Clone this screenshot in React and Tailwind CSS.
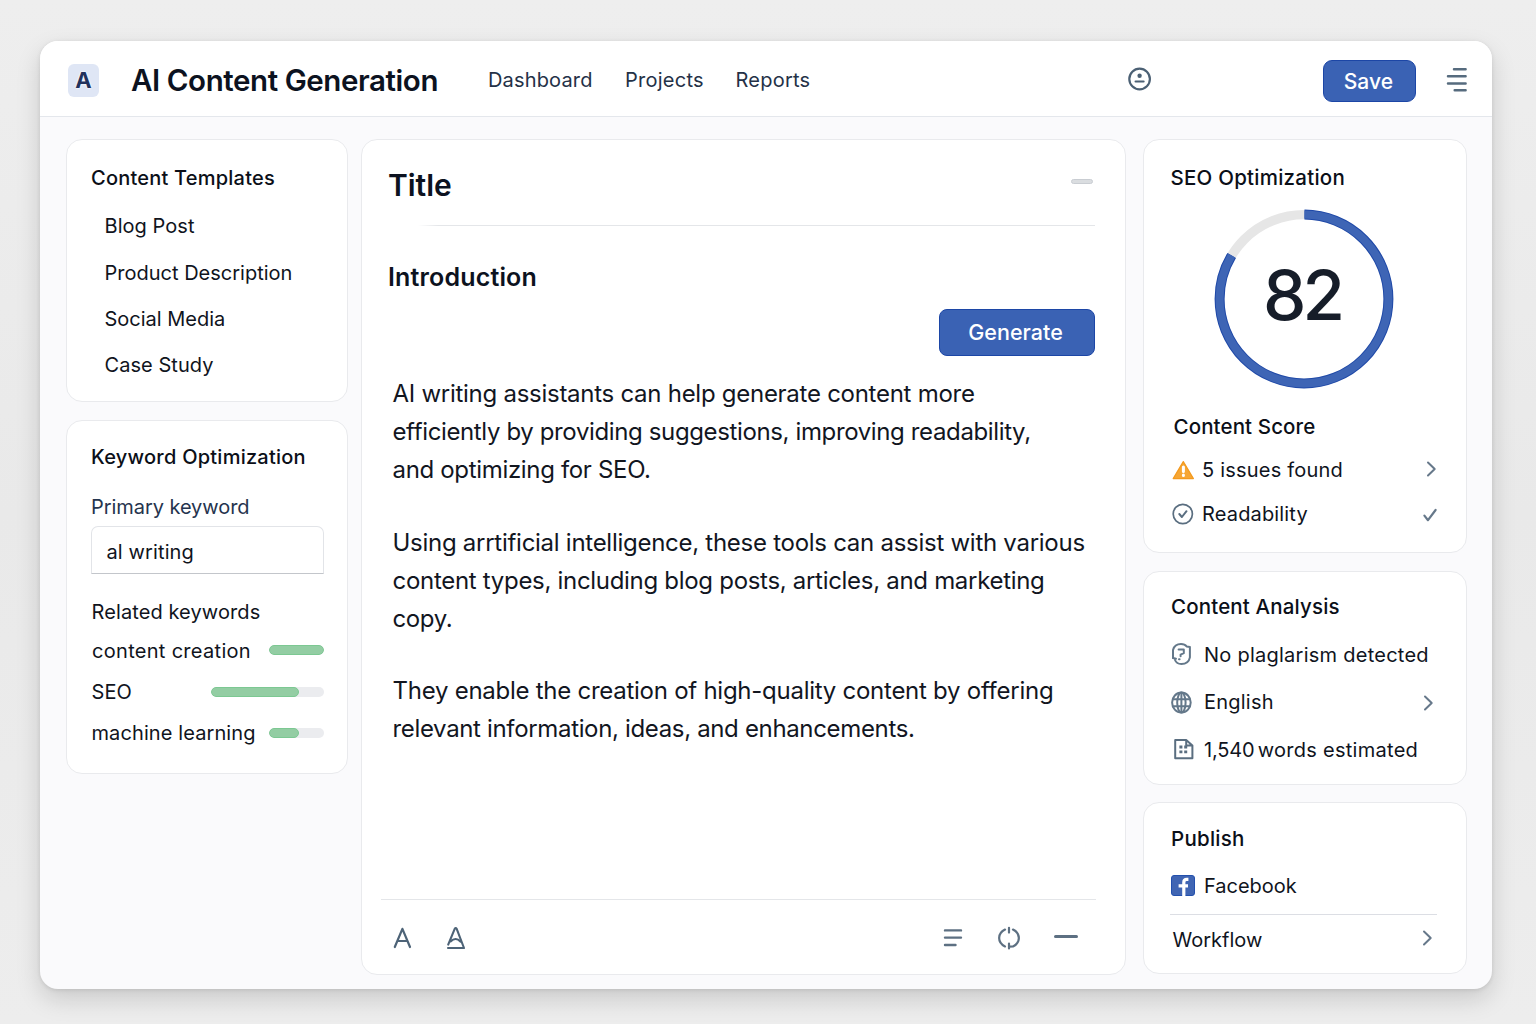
import React from "react";

const cardBase = "box-border flex flex-col rounded-[16px] border border-[#e9eaed] bg-white";
const heading = "h-6 whitespace-nowrap text-[20px] leading-6 font-medium text-[#0b0f18]";
const row = "h-6 whitespace-nowrap text-[20px] leading-6 font-normal text-[#10141d]";

function Chevron({ className = "" }) {
  return (
    <svg width="12" height="18" viewBox="0 0 12 18" fill="none" stroke="#66788a" strokeWidth="2" strokeLinecap="round" strokeLinejoin="round" className={className}>
      <path d="M2 2.5 8.7 9 2 15.5" />
    </svg>
  );
}

function ProfileIcon() {
  return (
    <svg width="24" height="24" viewBox="0 0 24 24" fill="none" stroke="#4b6074" strokeWidth="2.2" strokeLinecap="round" className="mb-[3px]">
      <circle cx="11.6" cy="12" r="10.3" />
      <circle cx="11.6" cy="8.8" r="2.2" fill="#4b6074" stroke="none" />
      <path d="M7.6 14.5h8" />
    </svg>
  );
}

function MenuIcon() {
  return (
    <svg width="22" height="26" viewBox="0 0 22 26" stroke="#566b7e" strokeWidth="2.5" strokeLinecap="round" className="mb-[2px]">
      <path d="M8 2.3h11.6M2 9.2h17.6M2 16.4h17.6M8.7 23.3h10.9" />
    </svg>
  );
}

function Header() {
  return (
    <header className="flex h-[76px] shrink-0 items-center border-b border-[#e4e7ec] bg-white pl-[28px] pr-[24px] pt-[4px]">
      <div className="mb-[1px] flex h-[33px] w-[31px] items-center justify-center rounded-[6px] bg-[#dfe6f5] text-[22px] leading-none font-bold text-[#22325c] [text-shadow:0_0_2px_#fff,0_0_2px_#fff]">
        A
      </div>
      <h1 className="ml-[32px] w-[308px] whitespace-nowrap text-[29.5px] font-semibold tracking-[-0.42px] text-[#0c1220]">
        AI Content Generation
      </h1>
      <nav className="mb-[2px] ml-[49px] flex text-[20px] leading-6 text-[#243147]">
        <a className="w-[137px] tracking-[0.16px]">Dashboard</a>
        <a className="w-[110.5px] tracking-[0.25px]">Projects</a>
        <a className="tracking-[0.24px]">Reports</a>
      </nav>
      <div className="ml-auto flex items-center">
        <ProfileIcon />
        <button className="ml-[171px] h-[42px] w-[93px] rounded-[9px] border border-[#1c46a6] bg-[#3a62b4] pr-[2px] pt-[2px] text-[21px] font-medium tracking-[0.1px] text-white">
          Save
        </button>
        <div className="ml-[30px]">
          <MenuIcon />
        </div>
      </div>
    </header>
  );
}

function Templates() {
  return (
    <section className={`${cardBase} h-[263px] pl-[24px] pt-[26px]`}>
      <h2 className={`${heading} tracking-[0.22px]`}>Content Templates</h2>
      <ul className="pl-[13.5px]">
        <li className={`${row} mt-[24px] tracking-[0.05px]`}>Blog Post</li>
        <li className={`${row} mt-[23px]`}>Product Description</li>
        <li className={`${row} mt-[22px]`}>Social Media</li>
        <li className={`${row} mt-[22px] tracking-[0.06px]`}>Case Study</li>
      </ul>
    </section>
  );
}

function Bar({ track, fill }) {
  return (
    <div className="h-[10px] overflow-hidden rounded-[5px] bg-[#ebecef]" style={{ width: track }}>
      <div className="h-full rounded-[5px] border border-[#7cc892] bg-[#93cda3]" style={{ width: fill }} />
    </div>
  );
}

function Keywords() {
  return (
    <section className={`${cardBase} mt-[18px] h-[354px] pl-[24px] pr-[23px] pt-[24px]`}>
      <h2 className={`${heading} tracking-[0.24px]`}>Keyword Optimization</h2>
      <label className={`${row} mt-[26px] tracking-[-0.06px] !text-[#25344e]`}>Primary keyword</label>
      <div className={`${row} -ml-[0.5px] mt-[7px] flex !h-[48px] items-center rounded-t-[7px] border border-[#e2e4e8] border-b-[#c3c6cb] pl-[15px] pt-[4px] tracking-[0.12px]`}>
        al writing
      </div>
      <h3 className={`${row} ml-[0.5px] mt-[26px] tracking-[0.1px]`}>Related keywords</h3>
      <div className={`${row} mt-[14px] flex items-center justify-between tracking-[0.3px]`}>
        <span className="ml-px pt-px">content creation</span> <Bar track={55} fill={55} />
      </div>
      <div className={`${row} ml-[0.5px] mt-[18px] flex items-center justify-between tracking-[0.07px]`}>
        SEO <Bar track={113} fill={88} />
      </div>
      <div className={`${row} ml-[0.5px] mt-[17px] flex items-center justify-between tracking-[0.1px]`}>
        machine learning <Bar track={55} fill={30} />
      </div>
    </section>
  );
}

function Editor() {
  return (
    <main className={`${cardBase} ml-[13px] h-[836px] w-[765px]`}>
      <div className="flex h-[90px] items-center justify-between pl-[26px] pr-[32px]">
        <h2 className="text-[30px] leading-9 font-semibold tracking-[-0.04px] text-[#0c1220]">Title</h2>
        <div className="mb-[7px] h-[5px] w-[22px] rounded-[2.5px] border border-[#c9cdd2] bg-[#dadde0]" />
      </div>
      <div className="ml-[56px] mr-[30px] mt-[-5px] h-px shrink-0 bg-[linear-gradient(90deg,#fff,#e4e6e9_20px)]" />
      <h3 className="ml-[26px] mt-[35px] h-8 text-[25px] leading-8 font-semibold tracking-[0.16px] text-[#0c1220]">Introduction</h3>
      <button className="ml-auto mr-[30px] mt-[16px] h-[47px] w-[156px] shrink-0 rounded-[8px] border border-[#1c46a6] bg-[#3a62b4] pr-[3px] text-[21.5px] font-medium tracking-[0.02px] text-white">
        Generate
      </button>
      <div className="ml-[30.5px] mt-[19px] whitespace-nowrap text-[24px] leading-[38px] font-normal text-[#12161f]">
        <p>
          <span className="block tracking-[-0.27px]">AI writing assistants can help generate content more</span>
          <span className="block tracking-[-0.37px]">efficiently by providing suggestions, improving readability,</span>
          <span className="block tracking-[-0.33px]">and optimizing for SEO.</span>
        </p>
        <p className="mt-[35px]">
          <span className="block tracking-[-0.27px]">Using arrtificial intelligence, these tools can assist with various</span>
          <span className="block tracking-[-0.3px]">content types, including blog posts, articles, and marketing</span>
          <span className="block tracking-[-0.4px]">copy.</span>
        </p>
        <p className="mt-[34px]">
          <span className="block tracking-[-0.26px]">They enable the creation of high-quality content by offering</span>
          <span className="block tracking-[-0.34px]">relevant information, ideas, and enhancements.</span>
        </p>
      </div>
      <div className="mt-auto ml-[19px] mr-[29px] flex h-[75px] items-center border-t border-[#e4e6e9] pl-[12px] pr-[18px] pt-[1px] text-[#4d6377]">
        <svg width="20" height="24" viewBox="0 0 20 24" fill="none" stroke="currentColor" strokeWidth="2.2" strokeLinecap="round" strokeLinejoin="round">
          <path d="M1.8 21 9.4 2.8 17 21M4.4 15h10" />
        </svg>
        <svg className="ml-[33px]" width="20" height="24" viewBox="0 0 20 24" fill="none" stroke="currentColor" strokeWidth="2.1" strokeLinecap="round" strokeLinejoin="round">
          <path d="M2.2 18.6 8.7 2.8q1-1.6 2 0L18 22H2M4.6 15.4q5.2-5 9.8.2" />
        </svg>
        <svg className="ml-auto" width="20" height="20" viewBox="0 0 20 20" stroke="#5d7082" strokeWidth="2.4" strokeLinecap="round">
          <path d="M2 2.4h16M2 9.6h16M2 17h10.5" />
        </svg>
        <svg className="ml-[33px]" width="26" height="24" viewBox="0 0 26 24" fill="none" stroke="#5d7082" strokeWidth="2.2" strokeLinecap="round">
          <path d="M9 3.6C1.2 7.4 1.2 16.6 9 20.4M17 3.6c7.8 3.8 7.8 13 0 16.8l-4 .2M13 1.8v4.8M13 17.6v4.8" />
        </svg>
        <div className="mb-[3px] ml-[32px] h-[3px] w-[24px] rounded-full bg-[#5d7082]" />
      </div>
    </main>
  );
}

function ScoreRing() {
  const r = 84.4;
  const c = 2 * Math.PI * r;
  return (
    <div className="relative ml-[43.5px] mt-[19px] h-[180px] w-[180px]">
      <svg width="180" height="180" viewBox="0 0 180 180" fill="none" className="-rotate-90">
        <circle cx="90" cy="90" r={r} stroke="#e6e6e6" strokeWidth="9.4" />
        <circle cx="90" cy="90" r={r} stroke="#1f49a8" strokeWidth="10" strokeDasharray={`${c * 0.834} ${c}`} strokeDashoffset="-0.5" />
        <circle cx="90" cy="90" r={r} stroke="#3e65b5" strokeWidth="8" strokeDasharray={`${c * 0.834} ${c}`} strokeDashoffset="-0.5" />
      </svg>
      <div className="absolute inset-0 flex items-center justify-center pb-[8px] pr-[4px] text-[69px] leading-none font-medium tracking-[-4px] text-[#161d29]">
        82
      </div>
    </div>
  );
}

function Seo() {
  return (
    <section className={`${cardBase} h-[414px] pl-[26.5px] pr-[28px] pt-[26px]`}>
      <h2 className={`${heading} !text-[20.5px] tracking-[0.24px]`}>SEO Optimization</h2>
      <ScoreRing />
      <h2 className={`${heading} ml-[3px] mt-[26px] !text-[20.5px] tracking-[0.12px]`}>Content Score</h2>
      <div className={`${row} ml-[1.5px] mt-[19px] flex items-center tracking-[0.2px]`}>
        <svg width="23" height="20" viewBox="0 0 23 20" className="mr-[7px]">
          <path d="M11.3 1.6 21.4 18.6H1.2Z" fill="#f6a634" stroke="#f39a1f" strokeWidth="1.2" strokeLinejoin="round" />
          <path d="M11.4 7v4.6M11.4 15v.6" stroke="#fff" strokeWidth="3" strokeLinecap="round" />
        </svg>
        5 issues found
        <Chevron className="mb-[3px] ml-auto" />
      </div>
      <div className={`${row} ml-[1px] mt-[20px] flex items-center tracking-[0.16px]`}>
        <svg width="22" height="22" viewBox="0 0 22 22" fill="none" stroke="#5a6e80" strokeLinecap="round" strokeLinejoin="round" className="mr-[8.5px]">
          <circle cx="10.8" cy="11" r="9.6" strokeWidth="1.7" />
          <path d="m7.3 11 2.6 3 4.6-5.8" strokeWidth="2" />
        </svg>
        Readability
        <svg width="16" height="16" viewBox="0 0 16 16" fill="none" stroke="#66788a" strokeWidth="2.2" strokeLinecap="round" strokeLinejoin="round" className="-mb-[1px] ml-auto">
          <path d="m2.4 8.6 3.6 4.6L13.6 3" />
        </svg>
      </div>
    </section>
  );
}

function Analysis() {
  return (
    <section className={`${cardBase} mt-[18px] h-[214px] pl-[27px] pr-[31px] pt-[23px]`}>
      <h2 className={`${heading} !text-[20.5px] tracking-[0.16px]`}>Content Analysis</h2>
      <div className={`${row} mt-[24px] flex items-center tracking-[0.25px]`}>
        <svg width="22" height="24" viewBox="0 0 22 24" fill="none" stroke="#64788a" strokeWidth="2" strokeLinecap="round" strokeLinejoin="round" className="mb-[2px] mr-[11px]">
          <path d="M2 16V8Q3.6 2.1 10 2.1q3.8 0 5.6 2.3l3.3.6v10.4Q17.6 22 10.4 22q-4.8 0-6.4-4" />
          <path d="M2 16l3 .8M7.6 7.6h5.2v3.6l-3.2 1.4v1.6M8 17.2h.6" />
        </svg>
        No plaglarism detected
      </div>
      <div className={`${row} mt-[23px] flex items-center tracking-[0.22px]`}>
        <svg width="22" height="23" viewBox="0 0 22 23" fill="none" stroke="#64788a" strokeWidth="2" className="mr-[11px]">
          <ellipse cx="10.4" cy="11.6" rx="9.3" ry="10" />
          <ellipse cx="10.4" cy="11.6" rx="4.2" ry="10" />
          <path d="M10.4 1.6v20M1.4 8.3h18M1.6 15.2h17.6" />
        </svg>
        English
        <Chevron className="-mb-[2px] ml-auto" />
      </div>
      <div className={`${row} mt-[23px] flex items-center`}>
        <svg width="22" height="22" viewBox="0 0 22 22" fill="none" stroke="#5a6e80" strokeWidth="2" strokeLinejoin="round" className="ml-[2px] mr-[9px]">
          <path d="M2.2 1.9h11l6.2 5.6v12.8H2.2ZM13.2 1.9v5.6h6.2" />
          <path d="M6.4 9h3M11.2 9h3M6.4 13.8h3M11.2 13.8h3" strokeWidth="2.8" />
        </svg>
        <span className="pt-px">
          <span className="mr-[-2.5px] tracking-[-0.15px]">1,540</span> <span className="tracking-[0.28px]">words estimated</span>
        </span>
      </div>
    </section>
  );
}

function Publish() {
  return (
    <section className={`${cardBase} mt-[17px] h-[172px] pl-[27px] pr-[29px] pt-[24px]`}>
      <h2 className={`${heading} !text-[20.5px] tracking-[0.24px]`}>Publish</h2>
      <div className={`${row} mt-[23px] flex items-center tracking-[-0.03px]`}>
        <svg width="24" height="21" viewBox="0 0 24 21" className="mb-[1px] mr-[9px]">
          <rect x="0.5" y="0.5" width="23" height="20" rx="2.5" fill="#4065b3" stroke="#2350ad" />
          <path d="M17.4 4.4h-1.6q-3 0-3 3V21M7.6 10.9h9.4" fill="none" stroke="#fff" strokeWidth="3.2" />
        </svg>
        Facebook
      </div>
      <div className="-ml-px mt-[16px] h-px bg-[#dcdee4]" />
      <div className={`${row} ml-[1.5px] mr-[3px] mt-[13px] flex items-center`}>
        Workflow
        <Chevron className="mb-[4px] ml-auto" />
      </div>
    </section>
  );
}

export default function App() {
  return (
    <div className="h-[1024px] w-[1536px] overflow-hidden bg-[linear-gradient(180deg,#eeeeee,#e9e9e9_50%,#ededed)] px-[40px] pt-[41px] font-['Inter',sans-serif]">
      <div className="flex h-[948px] w-[1452px] flex-col overflow-hidden rounded-[18px] bg-[#fafafc] shadow-[0_10px_24px_rgba(0,0,0,0.15),0_1px_4px_rgba(0,0,0,0.1)]">
        <Header />
        <div className="flex pl-[26px] pt-[22px]">
          <aside className="w-[282px]">
            <Templates />
            <Keywords />
          </aside>
          <Editor />
          <aside className="ml-[17px] w-[324px]">
            <Seo />
            <Analysis />
            <Publish />
          </aside>
        </div>
      </div>
    </div>
  );
}
